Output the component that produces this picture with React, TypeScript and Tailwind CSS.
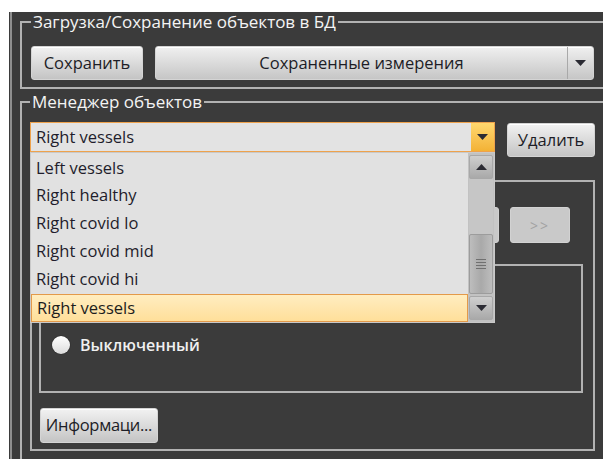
import React from 'react';

const font = { fontFamily: '"Open Sans", "Noto Sans", sans-serif' };

const objects = ['Left vessels', 'Right healthy', 'Right covid lo', 'Right covid mid', 'Right covid hi', 'Right vessels'];

function Caret({ className = '' }: { className?: string }) {
  return (
    <svg width="11" height="6" viewBox="0 0 11 6" className={className}>
      <path d="M0 0h11L5.5 6z" fill="#2b2b33" />
    </svg>
  );
}

function Button({ children, className = '' }: { children: React.ReactNode; className?: string }) {
  return (
    <div
      className={`flex items-center justify-center rounded-[3px] border border-[#d4d4d4] bg-gradient-to-b from-[#f2f2f2] to-[#c4c4c4] text-[16.5px] text-[#1d1d26] shadow-[inset_0_1px_0_#fff] ${className}`}
    >
      {children}
    </div>
  );
}

function GroupBox({ title, className = '', children }: { title: string; className?: string; children: React.ReactNode }) {
  return (
    <fieldset className={`border-2 border-[#b2b2b2] ${className}`}>
      <legend className="px-[2px] text-[17px] leading-[20px] text-[#f4f4f4]">{title}</legend>
      {children}
    </fieldset>
  );
}

function ObjectList() {
  return (
    <div className="absolute left-0 top-[30px] z-10 flex h-[171px] w-[465px] border border-[#c9c9c9] bg-[#e1e1e1]">
      <div className="flex flex-1 flex-col pt-px">
        {objects.map((name, i) => {
          const active = i === objects.length - 1;
          return (
            <div
              key={name}
              className={`flex h-[28px] items-center pl-[5px] text-[16.5px] ${
                active
                  ? 'mt-px border border-[#e39a4a] bg-gradient-to-b from-[#ffedc0] to-[#ffdf9a] pl-[4px] text-[#1d1d1d]'
                  : 'text-[#1f1d2c]'
              }`}
            >
              {name}
            </div>
          );
        })}
      </div>
      {/* scroll bar */}
      <div className="flex w-[26px] flex-col bg-[#c2c2c2] px-px py-[2px]">
        <div className="flex h-[24px] items-center justify-center rounded-[2px] border border-[#a8a8a8] bg-gradient-to-b from-[#cfcfcf] to-[#a9a9a9]">
          <Caret className="rotate-180" />
        </div>
        <div className="h-[55px] bg-[#c6c6c6]" />
        <div className="flex h-[60px] flex-col items-center justify-center gap-[2px] rounded-[2px] border border-[#9c9c9c] bg-gradient-to-r from-[#bdbdbd] via-[#a9a9a9] to-[#bdbdbd]">
          <div className="h-px w-[10px] bg-[#707070]" />
          <div className="h-px w-[10px] bg-[#707070]" />
          <div className="h-px w-[10px] bg-[#707070]" />
          <div className="h-px w-[10px] bg-[#707070]" />
        </div>
        <div className="mt-[2px] flex h-[24px] items-center justify-center rounded-[2px] border border-[#a8a8a8] bg-gradient-to-b from-[#cfcfcf] to-[#a9a9a9]">
          <Caret />
        </div>
      </div>
    </div>
  );
}

export default function App() {
  return (
    <div className="h-[459px] w-[603px] overflow-hidden bg-white pl-[9px] pt-[10px]" style={font}>
      <div className="h-full bg-[#3b3b3b] pl-px">
        <div className="h-full border-l-2 border-[#8f8f8f] pl-[8px]">
          {/* Загрузка/Сохранение */}
          <GroupBox title="Загрузка/Сохранение объектов в БД" className="mt-[2px] w-[590px] px-[9px] pb-[7px]">
            <div className="flex gap-[12px] pt-[14px]">
              <Button className="h-[34px] w-[112px]">Сохранить</Button>
              <div className="flex h-[34px] w-[439px] rounded-[3px] border border-[#d4d4d4] bg-gradient-to-b from-[#f0f0f0] to-[#c6c6c6] text-[16.5px] text-[#1d1d26] shadow-[inset_0_1px_0_#fff]">
                <div className="flex flex-1 items-center justify-center">Сохраненные измерения</div>
                <div className="flex w-[26px] items-center justify-center border-l border-[#a9a9a9]">
                  <Caret />
                </div>
              </div>
            </div>
          </GroupBox>

          {/* Менеджер объектов */}
          <GroupBox title="Менеджер объектов" className="mt-[3px] h-[400px] w-[590px] px-[8px]">
            <div className="flex items-start pt-[10px]">
              <div className="relative">
                <div className="flex h-[30px] w-[465px] border border-[#eea24c] bg-[#e3e3e3]">
                  <div className="flex flex-1 items-center pl-[5px] text-[16.5px] text-[#1f1d2c]">Right vessels</div>
                  <div className="flex w-[23px] items-center justify-center bg-gradient-to-b from-[#ffd86e] to-[#f3b234]">
                    <Caret />
                  </div>
                </div>
                <ObjectList />
              </div>
              <Button className="ml-[12px] mt-px h-[34px] w-[88px]">Удалить</Button>
            </div>

            <div className="mt-[23px] h-[271px] w-[565px] border-2 border-[#b2b2b2] pl-[7px] pr-[10px]">
              <div className="flex justify-end gap-[11px] pr-[13px] pt-[25px]">
                <div className="h-[36px] w-[69px] rounded-[3px] border border-[#d2d2d2] bg-[#c9c9c9]" />
                <div className="flex h-[36px] w-[60px] items-center justify-center rounded-[3px] border border-[#d2d2d2] bg-[#c9c9c9] text-[14px] tracking-[2px] text-[#a2a2a2]">
                  &gt;&gt;
                </div>
              </div>
              <div className="mt-[21px] flex h-[129px] flex-col border-2 border-[#b2b2b2] pl-[11px]">
                <div className="mt-[67px] flex items-center gap-[10px]">
                  <div className="h-[18px] w-[18px] rounded-full bg-gradient-to-b from-white to-[#dcdcdc] shadow-[0_0_1px_#000]" />
                  <span className="text-[16px] font-semibold text-[#f0f0f0]">Выключенный</span>
                </div>
              </div>
              <Button className="ml-px mt-[15px] h-[35px] w-[118px] tracking-[-0.3px]">Информаци...</Button>
            </div>
          </GroupBox>
        </div>
      </div>
    </div>
  );
}
